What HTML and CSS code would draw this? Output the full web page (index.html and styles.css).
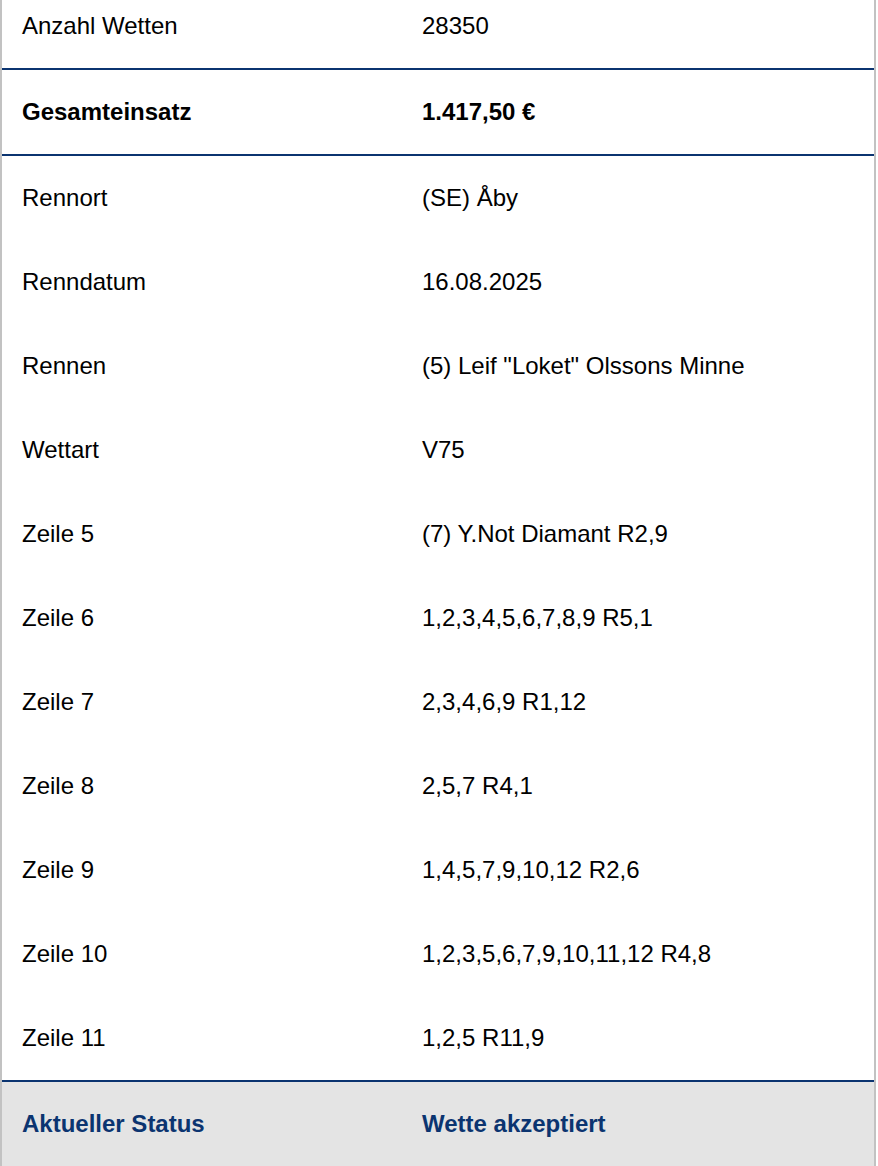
FILE: index.html
```html
<!DOCTYPE html>
<html lang="de">
<head>
<meta charset="utf-8">
<title>Wettschein</title>
<link rel="stylesheet" href="styles.css">
</head>
<body>
<div class="panel">
  <div class="row line"><div class="cell">Anzahl Wetten</div><div class="cell">28350</div></div>
  <div class="row line bold"><div class="cell">Gesamteinsatz</div><div class="cell">1.417,50 €</div></div>
  <div class="row"><div class="cell">Rennort</div><div class="cell">(SE) Åby</div></div>
  <div class="row"><div class="cell">Renndatum</div><div class="cell">16.08.2025</div></div>
  <div class="row"><div class="cell">Rennen</div><div class="cell">(5) Leif "Loket" Olssons Minne</div></div>
  <div class="row"><div class="cell">Wettart</div><div class="cell">V75</div></div>
  <div class="row"><div class="cell">Zeile 5</div><div class="cell">(7) Y.Not Diamant R2,9</div></div>
  <div class="row"><div class="cell">Zeile 6</div><div class="cell">1,2,3,4,5,6,7,8,9 R5,1</div></div>
  <div class="row"><div class="cell">Zeile 7</div><div class="cell">2,3,4,6,9 R1,12</div></div>
  <div class="row"><div class="cell">Zeile 8</div><div class="cell">2,5,7 R4,1</div></div>
  <div class="row"><div class="cell">Zeile 9</div><div class="cell">1,4,5,7,9,10,12 R2,6</div></div>
  <div class="row"><div class="cell">Zeile 10</div><div class="cell">1,2,3,5,6,7,9,10,11,12 R4,8</div></div>
  <div class="row line"><div class="cell">Zeile 11</div><div class="cell">1,2,5 R11,9</div></div>
  <div class="row status"><div class="cell">Aktueller Status</div><div class="cell">Wette akzeptiert</div></div>
</div>
</body>
</html>
```
FILE: styles.css
```css
html, body {
  margin: 0;
  padding: 0;
  background: #ffffff;
}
body {
  font-family: "Liberation Sans", Arial, Helvetica, sans-serif;
  font-size: 24px;
  color: #000000;
  overflow: hidden;
}
.panel {
  width: 872px;
  border-left: 2px solid #c2c2c2;
  border-right: 2px solid #c2c2c2;
  margin-top: -16px;
  min-height: 1200px;
  background: #ffffff;
}
.row {
  display: grid;
  grid-template-columns: 400px 1fr;
  height: 84px;
  align-items: center;
}
.cell {
  padding-left: 20px;
  white-space: nowrap;
}
.line {
  border-bottom: 2px solid #0b3470;
}
.bold {
  font-weight: bold;
}
.status {
  background: #e4e4e4;
  color: #0b3470;
  font-weight: bold;
}
```
